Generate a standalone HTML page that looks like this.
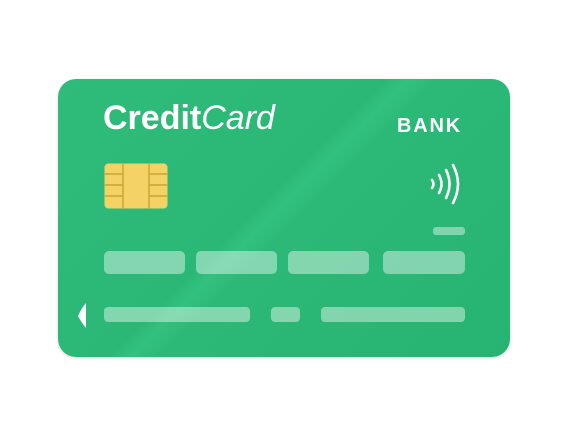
<!DOCTYPE html>
<html><head><style>
html,body{margin:0;padding:0;background:#fff;width:569px;height:438px;overflow:hidden;position:relative;font-family:"Liberation Sans",sans-serif}
.card{position:absolute;left:58px;top:79px;width:452px;height:278px;border-radius:18px;background:linear-gradient(135deg,#2fbb79 0%,#2bb877 45%,#33c17f 48%,#2cb977 52%,#27b371 100%);box-shadow:0 1px 3px rgba(0,0,0,.15)}
.b{position:absolute;background:rgba(255,255,255,.42);border-radius:5px}
.t{position:absolute;color:#fff}
</style></head><body>
<div class="card"></div>
<div class="t" style="left:103px;top:98px;font-size:34px;line-height:40px;letter-spacing:0"><b>Credit</b><i>Card</i></div>
<div class="t" style="left:397px;top:115px;font-size:20px;font-weight:bold;line-height:22px;letter-spacing:1.8px">BANK</div>
<svg style="position:absolute;left:104px;top:163px" width="65" height="47" viewBox="0 0 65 47">
<rect x="0.5" y="0.5" width="63" height="45" rx="4" fill="#f5d266"/>
<g stroke="#c9a535" stroke-width="1.4" fill="none">
<line x1="19" y1="0" x2="19" y2="46"/><line x1="45" y1="0" x2="45" y2="46"/>
<line x1="0" y1="11" x2="19" y2="11"/><line x1="0" y1="22" x2="19" y2="22"/><line x1="0" y1="33" x2="19" y2="33"/>
<line x1="45" y1="11" x2="64" y2="11"/><line x1="45" y1="22" x2="64" y2="22"/><line x1="45" y1="33" x2="64" y2="33"/>
</g></svg>
<svg style="position:absolute;left:428px;top:163px" width="36" height="44" viewBox="0 0 36 44">
<g stroke="#fff" stroke-width="2.6" fill="none" stroke-linecap="round">
<path d="M4 17 Q7 21 4 25"/><path d="M11 12 Q16 21 11 30"/><path d="M18 7 Q25 21 18 35"/><path d="M25 2 Q35 21 25 40"/>
</g></svg>
<div class="b" style="left:433px;top:227px;width:32px;height:8px;border-radius:3px"></div>
<div class="b" style="left:104px;top:251px;width:81px;height:23px"></div>
<div class="b" style="left:196px;top:251px;width:81px;height:23px"></div>
<div class="b" style="left:288px;top:251px;width:81px;height:23px"></div>
<div class="b" style="left:383px;top:251px;width:82px;height:23px"></div>
<div class="b" style="left:104px;top:307px;width:146px;height:15px;border-radius:4px"></div>
<div class="b" style="left:271px;top:307px;width:29px;height:15px;border-radius:4px"></div>
<div class="b" style="left:321px;top:307px;width:144px;height:15px;border-radius:4px"></div>
<svg style="position:absolute;left:76px;top:302px" width="12" height="27"><path d="M10 1 L10 26 Q5 20 2 14 Q5 7 10 1Z" fill="#fff"/></svg>
</body></html>
